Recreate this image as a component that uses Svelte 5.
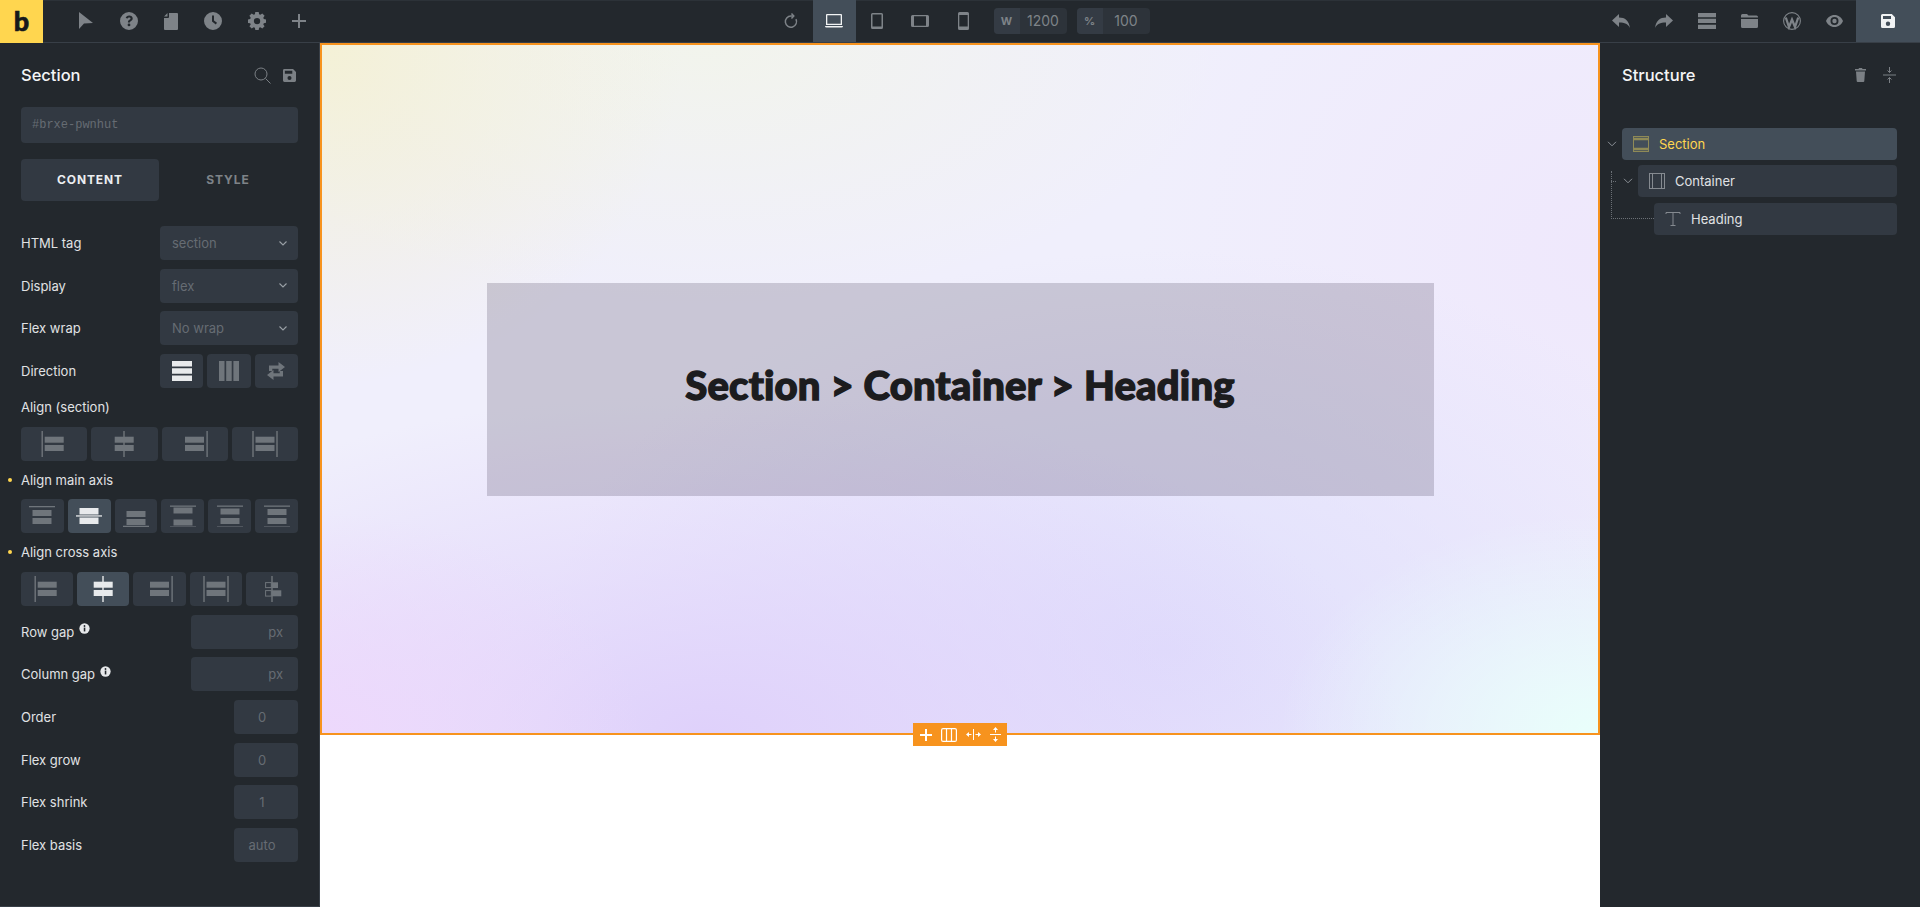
<script>
	const selects = [
		{ label: 'HTML tag', value: 'section' },
		{ label: 'Display', value: 'flex' },
		{ label: 'Flex wrap', value: 'No wrap' }
	]
	const alignSection = ['start', 'center', 'end', 'stretch']
	const mainAxis = [
		{ bars: [[5, 6], [13, 6]], lines: [1], on: false },
		{ bars: [[3, 6.5], [12.5, 6.5]], lines: [10.3], on: true },
		{ bars: [[6, 6], [14, 6]], lines: [20.7], on: false },
		{ bars: [[2.5, 6], [14.500, 6]], lines: [.5, 21.5], on: false },
		{ bars: [[3.500, 6], [13, 6]], lines: [.5, 21.5], on: false },
		{ bars: [[4, 6], [13, 6]], lines: [.5, 21.5], on: false }
	]
	const crossAxis = ['start', 'center', 'end', 'stretch', 'base']
	const smallInputs = [
		{ label: 'Order', value: '0' },
		{ label: 'Flex grow', value: '0' },
		{ label: 'Flex shrink', value: '1' },
		{ label: 'Flex basis', value: 'auto' }
	]
</script>

{#snippet alignIcon(kind)}
	<svg width="26" height="26" viewBox="0 0 26 26" fill="currentColor">
		{#if kind === 'start'}
			<rect x=".5" y="0" width="1.400" height="26" /><rect x="3.700" y="5.700" width="19" height="6" /><rect x="3.700" y="14" width="19" height="6" />
		{:else if kind === 'center'}
			<rect x="12.300" y="0" width="1.400" height="26" /><rect x="3.700" y="5.700" width="19" height="6" /><rect x="3.700" y="14" width="19" height="6" />
		{:else if kind === 'end'}
			<rect x="24.400" y="0" width="1.400" height="26" /><rect x="3" y="5.700" width="19" height="6" /><rect x="3" y="14" width="19" height="6" />
		{:else if kind === 'stretch'}
			<rect x=".3" y="0" width="1.400" height="26" /><rect x="24.300" y="0" width="1.400" height="26" /><rect x="3.500" y="5.700" width="19" height="6" /><rect x="3.500" y="14" width="19" height="6" />
		{:else}
			<rect x="12.300" y="0" width="1.400" height="26" />
			<rect x="6.600" y="6.600" width="5.700" height="5" fill="none" stroke="currentColor" /><rect x="13" y="6.300" width="6" height="5.700" />
			<rect x="6.600" y="14.600" width="5.700" height="5.500" fill="none" stroke="currentColor" /><rect x="13" y="14.300" width="9.300" height="6" />
		{/if}
	</svg>
{/snippet}

{#snippet info()}
	<svg class="info" width="11" height="11" viewBox="0 0 12 12">
		<circle cx="6" cy="6" r="5.600" fill="#e6e8ea" />
		<rect x="5.200" y="5" width="1.700" height="4.200" fill="#23282d" />
		<circle cx="6" cy="3.300" r="1" fill="#23282d" />
	</svg>
{/snippet}

<div class="app">
	<header class="topbar">
		<div class="tools left">
			<div class="logo">b</div>
			<div class="left-icons">
				<svg width="18" height="18" viewBox="0 0 18 18"><path d="M3 0 17 11 8 11.500 3 17Z" /></svg>
				<svg width="18" height="18" viewBox="0 0 18 18"><path fill-rule="evenodd" d="M9 0a9 9 0 1 0 0 18A9 9 0 0 0 9 0ZM9.200 3.400c2 0 3.500 1.200 3.500 3 0 1.300-.7 2-1.600 2.600-.8.500-1.100.8-1.100 1.500H7.900c0-1.500.5-2.100 1.500-2.800.6-.4 1.100-.7 1.100-1.300 0-.6-.6-1-1.300-1-.8 0-1.300.5-1.500 1.200L5.700 6c.4-1.600 1.700-2.600 3.500-2.600ZM9 11.500a1.400 1.400 0 1 1 0 2.800 1.400 1.400 0 0 1 0-2.800Z" /></svg>
				<svg width="14" height="17" viewBox="0 0 14 17"><path d="M5 0h8a1 1 0 0 1 1 1v15a1 1 0 0 1-1 1H1a1 1 0 0 1-1-1V5h4a1 1 0 0 0 1-1ZM3.500 0v3.500H0Z" /></svg>
				<svg width="18" height="18" viewBox="0 0 18 18"><path fill-rule="evenodd" d="M9 0a9 9 0 1 0 0 18A9 9 0 0 0 9 0ZM8 3.500h2v5.100l3 2.200-1.200 1.600L8 9.600Z" /></svg>
				<svg width="18" height="18" viewBox="0 0 18 18"><path fill-rule="evenodd" d="M7.300 0h3.400l.4 2.300 1.200.5L14.300 1.500l2.300 2.300-1.300 2 .5 1.200 2.200.4v3.300l-2.200.5-.5 1.200 1.300 1.900-2.300 2.300-2-1.300-1.200.5-.4 2.200H7.300l-.4-2.200-1.200-.5-2 1.300-2.300-2.300 1.300-1.900-.5-1.200L0 11V7.400l2.200-.4.500-1.200-1.300-2 2.300-2.300 2 1.300 1.200-.5ZM9 5.900a3.200 3.200 0 1 0 0 6.400 3.200 3.200 0 0 0 0-6.400Z" /></svg>
				<svg width="14" height="14" viewBox="0 0 14 14"><path d="M6 0h2v6h6v2H8v6H6V8H0V6h6Z" /></svg>
			</div>
		</div>
		<div class="tools center">
			<span class="device plain">
				<svg width="14" height="16" viewBox="0 0 15 17" fill="none" stroke="currentColor" stroke-width="1.600"><path d="M12.800 6.500A6 6 0 1 1 7.500 3.200h2.500" /><path d="M8 .5 10.500 3.200 8 5.800" /></svg>
			</span>
			<span class="device active">
				<svg width="18" height="14" viewBox="0 0 18 14" fill="currentColor"><path fill-rule="evenodd" d="M2 0h14a1 1 0 0 1 1 1v10H1V1a1 1 0 0 1 1-1Zm.3 1.300v8.400h13.400V1.300ZM0 12h18a1.500 1.500 0 0 1-1.500 1.500h-15A1.500 1.500 0 0 1 0 12Z" /></svg>
			</span>
			<span class="device">
				<svg width="12" height="16" viewBox="0 0 12 16" fill="currentColor"><path fill-rule="evenodd" d="M1.500 0h9A1.500 1.500 0 0 1 12 1.500v13a1.500 1.500 0 0 1-1.500 1.500h-9A1.500 1.500 0 0 1 0 14.500v-13A1.500 1.500 0 0 1 1.500 0Zm0 1.500v12h9v-12Z" /></svg>
			</span>
			<span class="device">
				<svg width="18" height="12" viewBox="0 0 18 12" fill="currentColor"><path fill-rule="evenodd" d="M1.500 0h15A1.500 1.500 0 0 1 18 1.500v9a1.500 1.500 0 0 1-1.500 1.500h-15A1.500 1.500 0 0 1 0 10.500v-9A1.500 1.500 0 0 1 1.500 0ZM3 1.300v9.400h12V1.300Z" /></svg>
			</span>
			<span class="device">
				<svg width="11" height="18" viewBox="0 0 11 18" fill="currentColor"><path fill-rule="evenodd" d="M1.500 0h8A1.500 1.500 0 0 1 11 1.500v15A1.500 1.500 0 0 1 9.500 18h-8A1.500 1.500 0 0 1 0 16.500v-15A1.500 1.500 0 0 1 1.500 0ZM1.300 3v11.500h8.400V3Z" /></svg>
			</span>
			<div class="size-box first"><span class="unit">W</span><span class="num">1200</span></div>
			<div class="size-box"><span class="unit">%</span><span class="num">100</span></div>
		</div>
		<div class="tools right">
			<div class="right-icons">
				<svg width="18" height="14" viewBox="0 0 18 14"><path d="M7 0v3.500c6 0 10 3 11 10.500-2-4-5-5.500-11-5.500V13L0 6.500Z" /></svg>
				<svg width="18" height="14" viewBox="0 0 18 14"><path d="M11 0v3.500C5 3.500 1 6.500 0 14c2-4 5-5.500 11-5.500V13l7-6.500Z" /></svg>
				<svg width="18" height="16" viewBox="0 0 18 16"><path d="M0 0h18v4.300H0ZM0 5.800h18v4.300H0ZM0 11.700h18V16H0Z" /></svg>
				<svg width="17" height="14" viewBox="0 0 17 14"><path d="M1.500 0h4.500l1.500 1.500h8A1.500 1.500 0 0 1 17 3v.5H0v-2A1.500 1.500 0 0 1 1.500 0ZM0 5h17v7.500a1.500 1.500 0 0 1-1.500 1.500h-14A1.500 1.500 0 0 1 0 12.500Z" /></svg>
				<svg width="18" height="18" viewBox="0 0 18 18"><circle cx="9" cy="9" r="8.400" fill="none" stroke="#7e8388" stroke-width="1.100" /><path d="M2.800 5.500 6 15 9 7.500 12 15 15.200 5.500" fill="none" stroke="#7e8388" stroke-width="2.300" /></svg>
				<svg width="17" height="12" viewBox="0 0 17 12"><path fill-rule="evenodd" d="M8.500 0C12.500 0 15.500 2.500 17 6c-1.500 3.500-4.500 6-8.500 6S1.500 9.500 0 6C1.500 2.500 4.500 0 8.500 0Zm0 2a4 4 0 1 0 0 8 4 4 0 0 0 0-8Zm0 1.800a2.200 2.200 0 1 1 0 4.400 2.200 2.200 0 0 1 0-4.400Z" /></svg>
			</div>
			<div class="save-btn">
				<svg width="14" height="14" viewBox="0 0 14 14"><path fill-rule="evenodd" d="M1.500 0h9.300L14 3.200v9.300a1.500 1.500 0 0 1-1.500 1.500h-11A1.500 1.500 0 0 1 0 12.500v-11A1.500 1.500 0 0 1 1.500 0ZM2 2v3h8V2Zm5 5.500a2.200 2.200 0 1 0 0 4.400 2.200 2.200 0 0 0 0-4.400Z" /></svg>
			</div>
		</div>
	</header>

	<div class="workspace">
		<aside class="panel">
			<div class="panel-head">
				<h2>Section</h2>
				<div class="head-icons">
					<svg width="17" height="17" viewBox="0 0 17 17" fill="none" stroke="#7b8085" stroke-width="1"><circle cx="7" cy="7" r="6" /><path d="M11.500 11.500 16.500 16.500" /></svg>
					<svg width="13" height="13" viewBox="0 0 14 14" fill="#7b8085"><path fill-rule="evenodd" d="M1.500 0h9.300L14 3.200v9.300a1.500 1.500 0 0 1-1.500 1.500h-11A1.500 1.500 0 0 1 0 12.500v-11A1.500 1.500 0 0 1 1.500 0ZM2 2v3h8V2Zm5 5.500a2.200 2.200 0 1 0 0 4.400 2.200 2.200 0 0 0 0-4.400Z" /></svg>
				</div>
			</div>
			<div class="id-input">#brxe-pwnhut</div>
			<div class="tabs">
				<div class="tab active">CONTENT</div>
				<div class="tab">STYLE</div>
			</div>

			<div class="controls">
				{#each selects as s}
					<div class="row">
						<span class="label">{s.label}</span>
						<div class="select">
							<span>{s.value}</span>
							<svg width="8" height="5" viewBox="0 0 8 5" fill="none" stroke="#9aa0a6" stroke-width="1.100"><path d="M.5.500 4 4 7.500.500" /></svg>
						</div>
					</div>
				{/each}
				<div class="row">
					<span class="label">Direction</span>
					<div class="dir-group">
						<button class="btn on">
							<svg width="20" height="20" viewBox="0 0 20 20" fill="currentColor"><path d="M0 0h20v5.500H0ZM0 7.200h20v5.500H0ZM0 14.400h20V20H0Z" /></svg>
						</button>
						<button class="btn">
							<svg width="20" height="20" viewBox="0 0 20 20" fill="currentColor"><path d="M0 0h5.500v20H0ZM7.200 0h5.500v20H7.200ZM14.400 0H20v20h-5.600Z" /></svg>
						</button>
						<button class="btn">
							<svg width="20" height="18" viewBox="0 0 20 18" fill="currentColor"><path d="M3 3.500h9.500V0L19 5l-6.500 5V6.800H6.300V9H3ZM17 14.500H7.500V18L1 13l6.500-5v3.200h6.200V9H17Z" /></svg>
						</button>
					</div>
				</div>

				<div class="block">
					<div class="block-label">Align (section)</div>
					<div class="btn-row">
						{#each alignSection as kind}
							<button class="btn"><span class="icon">{@render alignIcon(kind)}</span></button>
						{/each}
					</div>
				</div>
				<div class="block">
					<div class="block-label dot">Align main axis</div>
					<div class="btn-row">
						{#each mainAxis as a}
							<button class="btn" class:on={a.on}>
								<svg width="26" height="22" viewBox="0 0 26 22" fill="currentColor">
									{#each a.bars as b}<rect x="3.500" y={b[0]} width="19" height={b[1]} />{/each}
									{#each a.lines as l}<rect x="0" y={l} width="26" height="1.300" />{/each}
								</svg>
							</button>
						{/each}
					</div>
				</div>
				<div class="block">
					<div class="block-label dot">Align cross axis</div>
					<div class="btn-row">
						{#each crossAxis as kind, i}
							<button class="btn" class:on={i === 1}><span class="icon">{@render alignIcon(kind)}</span></button>
						{/each}
					</div>
				</div>

				<div class="row">
					<span class="label">Row gap {@render info()}</span>
					<div class="unit-input"><span>px</span></div>
				</div>
				<div class="row">
					<span class="label">Column gap {@render info()}</span>
					<div class="unit-input"><span>px</span></div>
				</div>
				{#each smallInputs as s}
					<div class="row">
						<span class="label">{s.label}</span>
						<div class="small-input"><span>{s.value}</span></div>
					</div>
				{/each}
			</div>
		</aside>

		<main class="stage">
			<section class="canvas">
				<div class="container"><h1>Section &gt; Container &gt; Heading</h1></div>
				<div class="element-bar">
					<svg width="12" height="12" viewBox="0 0 12 12"><path d="M5 0h2v5h5v2H7v5H5V7H0V5h5Z" /></svg>
					<svg width="16" height="14" viewBox="0 0 16 14" fill="none" stroke="#fff" stroke-width="1.200"><rect x=".6" y=".6" width="14.800" height="12.800" rx="1.500" /><path d="M5.500.6v12.800M10.500.6v12.800" /></svg>
					<svg width="15" height="11" viewBox="0 0 15 11" fill="#fff"><rect x="7" y="0" width="1" height="11" /><path d="M0 5.500 3 3v2h2.500v1H3v2ZM15 5.500 12 3v2H9.500v1H12v2Z" /></svg>
					<svg width="11" height="15" viewBox="0 0 11 15" fill="#fff"><rect x="0" y="7" width="11" height="1" /><path d="M5.500 0 8 3H6v2.500H5V3H3ZM5.500 15 8 12H6V9.500H5V12H3Z" /></svg>
				</div>
			</section>
		</main>

		<aside class="structure">
			<div class="structure-head">
				<h2>Structure</h2>
				<div class="head-icons wide">
					<svg width="11" height="14" viewBox="0 0 11 14" fill="#7b8085"><path d="M4 0h3l.5 1H11v1.500H0V1h3.500ZM1 3.500h9L9.300 13a1 1 0 0 1-1 1H2.700a1 1 0 0 1-1-1Z" /></svg>
					<svg width="13" height="16" viewBox="0 0 13 16" fill="none" stroke="#7b8085" stroke-width="1"><path d="M0 8h13M6.500 0v5.500M4.500 3.500l2 2 2-2M6.500 16v-5.500M4.500 12.500l2-2 2 2" /></svg>
				</div>
			</div>
			<div class="tree">
				<div class="tree-row">
					<svg class="chevron" width="10" height="6" viewBox="0 0 10 6" fill="none" stroke="#8b9096" stroke-width="1"><path d="M1 .8 5 4.800 9 .8" /></svg>
					<div class="node active">
						<svg width="16" height="16" viewBox="0 0 16 16" fill="none" stroke="#8f8a57"><rect x=".5" y=".5" width="15" height="15" /><path d="M0 3h16M0 13h16" stroke-width="2.500" /></svg>
						<span>Section</span>
					</div>
				</div>
				<div class="tree-row level1">
					<svg class="guide-h" width="6" height="1"><line x1="0" y1=".5" x2="6" y2=".5" stroke="#6b7076" stroke-dasharray="1 1" /></svg>
					<svg class="chevron" width="10" height="6" viewBox="0 0 10 6" fill="none" stroke="#8b9096" stroke-width="1"><path d="M1 .8 5 4.800 9 .8" /></svg>
					<div class="node">
						<svg width="16" height="16" viewBox="0 0 16 16" fill="none" stroke="#858a90"><rect x=".5" y=".5" width="15" height="15" /><path d="M3.500 0v16M12.500 0v16" /></svg>
						<span>Container</span>
					</div>
				</div>
				<div class="tree-row level2">
					<div class="guide-elbow"></div>
					<div class="node">
						<svg width="16" height="16" viewBox="0 0 16 16" fill="none" stroke="#858a90"><path d="M1 3V1.500h14V3M8 1.500v13M5.500 14.500h5" /></svg>
						<span>Heading</span>
					</div>
				</div>
			</div>
		</aside>
	</div>
</div>

<style>
	:global(body) {
		margin: 0;
		background: #fff;
	}

	.app {
		height: 907px;
		display: flex;
		flex-direction: column;
		overflow: hidden;
		font-family: Inter, "Liberation Sans", sans-serif;
		font-size: 13px;
		color: #e0e2e4;
	}

	.topbar {
		height: 42px;
		flex-shrink: 0;
		display: grid;
		grid-template-columns: 1fr auto 1fr;
		background: #23282d;
		border-bottom: 1px solid #383f47;
		box-shadow: inset 0 1px #2c3238;
	}

	.tools {
		display: flex;
		align-items: center;
		height: 42px;
	}

	.logo {
		width: 43px;
		height: 43px;
		background: #ffd64f;
		color: #17191c;
		font-family: Lato, sans-serif;
		font-weight: 900;
		font-size: 27px;
		line-height: 41px;
		text-align: center;
		-webkit-text-stroke: .6px #17191c;
	}

	.left-icons {
		display: flex;
		align-items: center;
		margin-left: 33px;
		gap: 26px;
	}

	.left-icons svg {
		fill: #7e8388;
	}

	.center {
		color: #7e8388;
		margin-left: -1px;
	}

	.device {
		width: 43px;
		height: 42px;
		display: flex;
		align-items: center;
		justify-content: center;
	}

	.device.active {
		background: #434e59;
		color: #f1f3f4;
	}

	.size-box {
		display: flex;
		height: 26px;
		margin-left: 10px;
		border-radius: 4px;
		background: #2d333a;
		overflow: hidden;
		font-size: 14px;
		color: #7e8388;
	}

	.size-box.first {
		margin-left: 9px;
	}

	.unit {
		width: 26px;
		background: #343b44;
		font-size: 11px;
		font-weight: 700;
		line-height: 26px;
		text-align: center;
	}

	.num {
		width: 47px;
		line-height: 26px;
		text-align: center;
	}

	.right {
		justify-content: flex-end;
		color: #7e8388;
	}

	.right-icons {
		display: flex;
		align-items: center;
		gap: 25px;
		margin-right: 13px;
	}

	.right-icons svg {
		fill: #7e8388;
	}

	.save-btn {
		width: 64px;
		height: 42px;
		background: #434e59;
		display: flex;
		align-items: center;
		justify-content: center;
	}

	.save-btn svg {
		fill: #f1f3f4;
	}

	.workspace {
		flex: 1;
		display: flex;
		min-height: 0;
	}

	.panel {
		width: 320px;
		flex-shrink: 0;
		box-sizing: border-box;
		padding: 0 21px 0 21px;
		background: #23282d;
		border-right: 1px solid #383f47;
		border-bottom: 1px solid #383f47;
	}

	.panel-head {
		height: 64px;
		display: flex;
		align-items: center;
		justify-content: space-between;
	}

	h2 {
		margin: 0 0 1px;
		font-size: 16.5px;
		font-weight: 500;
		color: #f4f5f6;
	}

	.head-icons {
		display: flex;
		align-items: center;
		gap: 12px;
		margin-right: 2px;
	}

	.id-input {
		height: 36px;
		border-radius: 4px;
		background: #323942;
		padding-left: 11px;
		font-family: "Liberation Mono", monospace;
		font-size: 12px;
		line-height: 37px;
		color: #666c73;
	}

	.tabs {
		display: grid;
		grid-template-columns: 138px 138px;
		height: 42px;
		margin-top: 16px;
		font-size: 12px;
		font-weight: 700;
		letter-spacing: .9px;
		line-height: 42px;
		text-align: center;
		color: #7e8388;
	}

	.tab.active {
		background: #323942;
		border-radius: 4px;
		color: #eceef0;
	}

	.controls {
		margin-top: 25px;
		display: flex;
		flex-direction: column;
		gap: 8.67px;
	}

	.row {
		height: 34px;
		flex-shrink: 0;
		display: flex;
		align-items: center;
		justify-content: space-between;
	}

	.label {
		display: flex;
		align-items: center;
		gap: 5px;
	}

	.info {
		margin-top: -6px;
	}

	.select {
		width: 138px;
		height: 34px;
		box-sizing: border-box;
		padding: 0 11px 0 12px;
		display: flex;
		align-items: center;
		justify-content: space-between;
		border-radius: 4px;
		background: #323942;
		color: #666c73;
	}

	.dir-group {
		width: 138px;
		display: grid;
		grid-template-columns: repeat(3, 1fr);
		gap: 4px;
	}

	.btn {
		height: 34px;
		padding: 0;
		border: none;
		border-radius: 4px;
		background: #323942;
		color: #6f757b;
		display: flex;
		align-items: center;
		justify-content: center;
	}

	.btn.on {
		color: #e8eaec;
	}

	.btn-row .btn.on {
		background: #434e59;
	}

	.icon {
		display: flex;
	}

	.block {
		display: flex;
		flex-direction: column;
		gap: 11.67px;
		margin-top: 2.33px;
	}

	.block-label {
		position: relative;
		height: 16px;
		line-height: 16px;
	}

	.block-label.dot::before {
		content: "";
		position: absolute;
		left: -13px;
		top: 6px;
		width: 4px;
		height: 4px;
		border-radius: 50%;
		background: #ffd64f;
	}

	.btn-row {
		display: flex;
		gap: 4px;
	}

	.btn-row .btn {
		flex: 1;
	}

	.unit-input {
		width: 107px;
		height: 34px;
		box-sizing: border-box;
		padding-right: 15px;
		border-radius: 4px;
		background: #323942;
		color: #666c73;
		line-height: 34px;
		text-align: right;
	}

	.small-input {
		width: 64px;
		height: 34px;
		box-sizing: border-box;
		padding-right: 8px;
		border-radius: 4px;
		background: #323942;
		color: #666c73;
		line-height: 34px;
		text-align: center;
	}

	.stage {
		flex: 1;
		min-width: 0;
		background: #fff;
	}

	.canvas {
		position: relative;
		height: 692px;
		box-sizing: border-box;
		border: 2px solid #f7931e;
		display: flex;
		align-items: center;
		justify-content: center;
		background:
			radial-gradient(ellipse 360px 340px at 0% 0%, #f4f1d6 0%, rgba(244, 241, 214, 0) 100%),
			radial-gradient(ellipse 520px 260px at 30% 0%, #f2f4ec 0%, rgba(242, 244, 236, 0) 100%),
			radial-gradient(ellipse 320px 220px at 100% 100%, #e9fffb 0%, rgba(233, 255, 251, 0) 100%),
			radial-gradient(ellipse 320px 220px at 0% 100%, #edd8fc 0%, rgba(237, 216, 252, 0) 100%),
			radial-gradient(ellipse 700px 340px at 30% 100%, #dfd1fb 0%, rgba(223, 209, 251, 0) 100%),
			radial-gradient(ellipse 620px 400px at 66% 88%, rgba(221, 219, 252, .85) 0%, rgba(221, 219, 252, 0) 100%),
			radial-gradient(ellipse 460px 420px at 100% 30%, #efe8fc 0%, rgba(239, 232, 252, 0) 100%),
			#f0effc;
	}

	.container {
		width: 947px;
		height: 213px;
		display: flex;
		align-items: center;
		justify-content: center;
		background: rgba(12, 0, 30, .17);
	}

	h1 {
		margin: -9px 0 0;
		font-family: Lato, sans-serif;
		font-size: 40px;
		font-weight: 900;
		font-variant-ligatures: none;
		letter-spacing: .2px;
		color: #1c1c1e;
		-webkit-text-stroke: 1.4px #1c1c1e;
	}

	.element-bar {
		position: absolute;
		left: 591px;
		bottom: -13px;
		width: 94px;
		height: 23px;
		background: #f7931e;
		display: flex;
		align-items: center;
		justify-content: center;
		gap: 9px;
	}

	.element-bar svg:first-child {
		fill: #fff;
	}

	.structure {
		width: 320px;
		flex-shrink: 0;
		box-sizing: border-box;
		background: #23282d;
	}

	.structure-head {
		height: 64px;
		display: flex;
		align-items: center;
		justify-content: space-between;
		padding: 0 24px 0 22px;
	}

	.head-icons.wide {
		gap: 17px;
		margin: 0;
	}

	.tree {
		margin-top: 21px;
		display: flex;
		flex-direction: column;
		gap: 5.33px;
		padding-right: 23px;
	}

	.tree-row {
		position: relative;
		display: flex;
		align-items: center;
		height: 32px;
		padding-left: 22px;
	}

	.level1 {
		padding-left: 38px;
	}

	.level2 {
		padding-left: 54px;
	}

	.chevron {
		position: absolute;
		left: 7px;
		top: 13px;
	}

	.level1 .chevron {
		left: 23px;
	}

	.guide-h {
		position: absolute;
		left: 11px;
		top: 16px;
	}

	.guide-elbow {
		position: absolute;
		left: 11px;
		top: -32px;
		width: 43px;
		height: 48px;
		box-sizing: border-box;
		border-left: 1px dotted #6b7076;
		border-bottom: 1px dotted #6b7076;
	}

	.node {
		flex: 1;
		height: 32px;
		display: flex;
		align-items: center;
		gap: 10px;
		padding-left: 11px;
		border-radius: 4px;
		background: #323942;
	}

	.node.active {
		background: #434e59;
		color: #ffd64f;
	}
</style>
